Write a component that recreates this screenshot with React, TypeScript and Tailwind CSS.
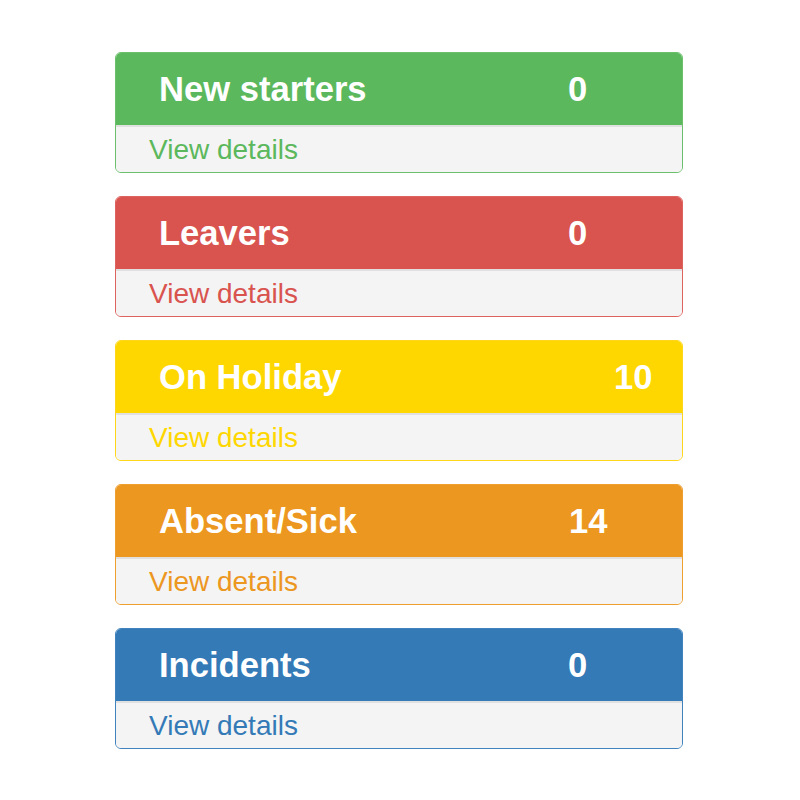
import React from "react";

type Card = {
  title: string;
  count: string;
  bg: string;
  border: string;
  text: string;
  numPad: string;
};

const cards: Card[] = [
  { title: "New starters", count: "0", bg: "bg-[#5cb85c]", border: "border-[#6cc06c]", text: "text-[#5cb85c]", numPad: "pl-[452px]" },
  { title: "Leavers", count: "0", bg: "bg-[#d9534f]", border: "border-[#de625e]", text: "text-[#d9534f]", numPad: "pl-[452px]" },
  { title: "On Holiday", count: "10", bg: "bg-[#ffd700]", border: "border-[#ffd71a]", text: "text-[#ffd700]", numPad: "pl-[498px]" },
  { title: "Absent/Sick", count: "14", bg: "bg-[#ec971f]", border: "border-[#ee9f2f]", text: "text-[#ec971f]", numPad: "pl-[453px]" },
  { title: "Incidents", count: "0", bg: "bg-[#337ab7]", border: "border-[#3f82bd]", text: "text-[#337ab7]", numPad: "pl-[452px]" },
];

export default function App() {
  return (
    <div
      className="w-[800px] h-[800px] bg-white pt-[52px] flex flex-col items-start pl-[115px] gap-[23px]"
      style={{ fontFamily: '"Liberation Sans", Arial, sans-serif' }}
    >
      {cards.map((c) => (
        <div
          key={c.title}
          className={`w-[568px] border ${c.border} rounded-[6px] overflow-hidden flex flex-col`}
        >
          <div className={`${c.bg} h-[72px] relative flex items-center text-white font-bold text-[34.6px] leading-none`}>
            <div className="absolute left-[43px] top-1/2 -translate-y-1/2">{c.title}</div>
            <div className={`${c.numPad}`}>{c.count}</div>
          </div>
          <div className={`h-[47px] bg-[#f4f4f4] border-t-2 border-[#e0e0e0] flex items-center pl-[33px] text-[28px] leading-none ${c.text}`}>
            View details
          </div>
        </div>
      ))}
    </div>
  );
}
